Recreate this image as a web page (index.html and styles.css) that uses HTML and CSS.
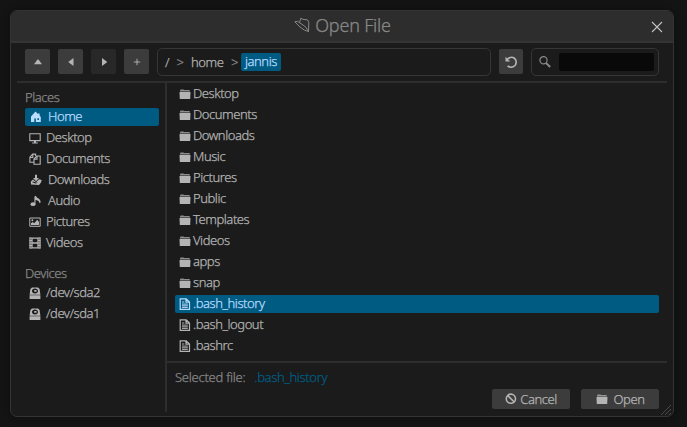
FILE: index.html
```html
<!DOCTYPE html>
<html lang="en">
<head>
<meta charset="utf-8">
<title>Open File</title>
<link rel="stylesheet" href="styles.css">
</head>
<body>
<svg class="defs" width="0" height="0">
  <symbol id="folder" viewBox="0 0 12 10"><path fill="currentColor" d="M.5 3H11.5L11.2 10H.8z"/><path fill="currentColor" opacity=".75" d="M1 2.6V1.2L1.8.5H4.5L5 1H10.2L11 1.8V2.6z"/></symbol>
  <symbol id="file" viewBox="0 0 12 12"><path fill="none" stroke="currentColor" stroke-width="1.2" d="M1.2.8H7.2L10.5 4V11.3H1.2zM7 .8V4.2H10.5"/><path stroke="currentColor" stroke-width="1" d="M3 4H5.3M3 6.1H8.8M3 7.8H8.8M3 9.4H8.8"/></symbol>
  <symbol id="drive" viewBox="0 0 12 12"><path fill="currentColor" fill-rule="evenodd" d="M3 .4H9L10.6 2 11.4 7.8H.6L1.4 2zM6 1.6C4.2 1.6 3 2.7 3 4S4.2 6.4 6 6.4 9 5.3 9 4 7.8 1.6 6 1.6z"/><path fill="currentColor" d="M5.2 2.9H7.6V4.8H5.2zM.6 8.3H11.4V11.9H.6z"/></symbol>
</svg>
<main class="window">
  <header class="titlebar">
    <svg class="title-icon" viewBox="0 0 16 16"><path d="M.8 4.8L3.5 4.3 11.5 9.8 14.5 14.5 10.5 13.2 6 10zM5.5 5.6L6.8 1.2 9 2.4 13.4 2.8 14.8 5.2 14.5 14.5"/></svg>
    <h1>Open File</h1>
    <svg class="close" viewBox="0 0 12 12"><path d="M1 1L11 11M11 1L1 11"/></svg>
  </header>
  <div class="toolbar">
    <div class="nav">
      <button><svg viewBox="0 0 12 12"><path fill="currentColor" d="M2 8.2L5.5 3.5H6.5L10 8.2z"/></svg></button>
      <button><svg viewBox="0 0 12 12"><path fill="currentColor" d="M8.5 2L3.5 5.7V6.3L8.5 10z"/></svg></button>
      <button class="dim"><svg viewBox="0 0 12 12"><path fill="currentColor" d="M4 2L9 5.7V6.3L4 10z"/></svg></button>
      <button><svg viewBox="0 0 12 12"><path stroke="currentColor" stroke-width=".9" d="M2.8 6H9.2M6 2.8V9.2"/></svg></button>
    </div>
    <div class="path"><span class="root">/</span><i>&gt;</i><span>home</span><i class="second">&gt;</i><b>jannis</b></div>
    <button class="reload"><svg viewBox="0 0 12 12"><path fill="none" stroke="currentColor" stroke-width="1.6" d="M2 3.4L4 2C8 -.2 11.3 2.8 11.2 6.2C11 10.6 6.2 12.6 2.6 10"/><path fill="currentColor" d="M.5 .8V5.6H5.2z"/></svg></button>
    <div class="search"><svg viewBox="0 0 12 12"><circle cx="4.5" cy="4.3" r="3.6"/><path d="M7 7L11.2 11" stroke-width="2"/></svg><div class="query"></div></div>
  </div>
  <div class="content">
    <nav class="sidebar">
      <h2>Places</h2>
      <ul>
        <li class="selected inset"><svg viewBox="0 0 12 12"><path fill="currentColor" fill-rule="evenodd" d="M5.5 .5L8 3V2.4H9.6V4.6L10.8 6V11H1V5.6zM4.3 7.5V11H5.9V7.5zM7.4 7.3V9H9V7.3z"/></svg><span>Home</span></li>
        <li><svg viewBox="0 0 12 12"><path fill="none" stroke="currentColor" stroke-width="1.1" d="M.8 1.8H11.2V8.6H.8z"/><path fill="currentColor" d="M5 9H7V10.4H8.8V11.6H3.2V10.4H5z"/></svg><span>Desktop</span></li>
        <li><svg viewBox="0 0 12 12"><path fill="none" stroke="currentColor" stroke-width="1.1" d="M4.6 9.2H.9V4.2L3.6 1.1H6.6V3M.9 4.5H3.8V1.2M5 6L7.8 3H11.2V11.3H5zM5 6.3H8V3"/></svg><span>Documents</span></li>
        <li class="inset"><svg viewBox="0 0 12 12"><path fill="currentColor" fill-rule="evenodd" d="M5 .8H7V4H9L6 7.2 3 4H5zM.8 7.4L3 5.5 6 8.3 9 5.2 11.7 6 11 8.5 9 11 1 10.5zM2.2 8.3L5.5 9.5 8 8.8 6 8.6 3 7.6z"/></svg><span>Downloads</span></li>
        <li class="inset"><svg viewBox="0 0 12 12"><ellipse cx="3" cy="9.2" rx="2.5" ry="1.9" fill="currentColor"/><path fill="currentColor" d="M4.4 9V1.5L6 .8C6.5 3.5 11 3.5 10.6 7.5L9.5 8.3C9.5 6 7 5 5.5 5V9z"/></svg><span>Audio</span></li>
        <li><svg viewBox="0 0 12 12"><path fill="none" stroke="currentColor" d="M.8 2H11.2V10.3H.8z"/><circle cx="3.4" cy="4.3" r="1" fill="currentColor"/><path fill="currentColor" d="M2 9V7.2L3.7 6 5.2 7.2 8.2 3.8 10 6V9z"/></svg><span>Pictures</span></li>
        <li><svg viewBox="0 0 12 12"><path fill="none" stroke="currentColor" stroke-width="1.3" d="M1 .5V11.6M11 .5V11.6M3 .8V11.4M9 .8V11.4M3 1.2H9M3 6H9M3 10.8H9"/><path stroke="currentColor" d="M.5 1H3M.5 3.5H3M.5 6H3M.5 8.5H3M.5 11H3M9 1H11.5M9 3.5H11.5M9 6H11.5M9 8.5H11.5M9 11H11.5"/></svg><span>Videos</span></li>
      </ul>
      <h2 class="devices">Devices</h2>
      <ul>
        <li><svg><use href="#drive"/></svg><span>/dev/sda2</span></li>
        <li><svg><use href="#drive"/></svg><span>/dev/sda1</span></li>
      </ul>
    </nav>
    <section class="main">
      <ul class="files">
        <li><svg class="folder"><use href="#folder"/></svg><span>Desktop</span></li>
        <li><svg class="folder"><use href="#folder"/></svg><span>Documents</span></li>
        <li><svg class="folder"><use href="#folder"/></svg><span>Downloads</span></li>
        <li><svg class="folder"><use href="#folder"/></svg><span>Music</span></li>
        <li><svg class="folder"><use href="#folder"/></svg><span>Pictures</span></li>
        <li><svg class="folder"><use href="#folder"/></svg><span>Public</span></li>
        <li><svg class="folder"><use href="#folder"/></svg><span>Templates</span></li>
        <li><svg class="folder"><use href="#folder"/></svg><span>Videos</span></li>
        <li><svg class="folder"><use href="#folder"/></svg><span>apps</span></li>
        <li><svg class="folder"><use href="#folder"/></svg><span>snap</span></li>
        <li class="selected"><svg><use href="#file"/></svg><span>.bash_history</span></li>
        <li><svg><use href="#file"/></svg><span>.bash_logout</span></li>
        <li><svg><use href="#file"/></svg><span>.bashrc</span></li>
      </ul>
      <footer>
        <p>Selected file:<span>.bash_history</span></p>
        <div class="actions">
          <button><svg viewBox="0 0 12 12"><path fill="none" stroke="currentColor" stroke-width="1.6" d="M2.6 2.4L9.2 9M10.5 5.7A4.6 4.6 0 1 1 1.3 5.7A4.6 4.6 0 1 1 10.5 5.7"/></svg><span>Cancel</span></button>
          <button class="open"><svg class="folder"><use href="#folder"/></svg><span>Open</span></button>
        </div>
      </footer>
    </section>
  </div>
  <svg class="grip" viewBox="0 0 12 12"><path d="M1 11L11 1M5 11L11 5M9 11L11 9"/></svg>
</main>
</body>
</html>
```
FILE: styles.css
```css
* { box-sizing: border-box; margin: 0; padding: 0; }
body {
  width: 687px; height: 427px; overflow: hidden;
  padding: 10px 13px 10px 10px;
  background: #151515; color: #b4b4b4;
  font: 300 13px/18px "Noto Sans", "Open Sans", sans-serif;
  letter-spacing: -0.45px;
  -webkit-text-stroke: 0.25px currentColor;
}
.defs { position: absolute; }
ul { list-style: none; }
button {
  border: 0; border-radius: 2px; background: #3c3c3c; color: inherit;
  font: inherit; letter-spacing: inherit;
  display: flex; align-items: center; justify-content: center;
}
svg { width: 12px; height: 12px; flex: none; }
.window {
  position: relative; height: 407px; width: 664px;
  display: flex; flex-direction: column;
  border: 1.5px solid #343434; border-radius: 7px;
  background: #1b1b1b; box-shadow: 0 0 12px #0d0d0d; overflow: hidden;
}
.titlebar {
  height: 32px; flex: none; display: flex; align-items: center; justify-content: center;
  background: #2d2d2d; border-bottom: 2px solid #343434;
  color: #888; position: relative;
}
h1 { font-size: 18px; font-weight: 300; line-height: 24px; letter-spacing: -0.2px; margin-top: -3px; }
.title-icon { width: 16px; height: 16px; margin: -2px 5px 0 1px; }
.title-icon path { fill: none; stroke: currentColor; stroke-width: 1; }
.close { position: absolute; right: 10px; top: 10px; color: #c0c0c0; }
.close path { stroke: currentColor; stroke-width: 1.1; }
.toolbar {
  height: 40px; flex: none; margin: 0 6px; padding: 5px 8px 6px;
  display: flex; align-items: center; border-bottom: 2px solid #2d2d2d;
}
.nav { display: flex; gap: 8px; }
.nav button, .reload { width: 25px; height: 25px; }
.nav .dim { background: #282828; }
.path {
  width: 335px; height: 28px; margin: 0 8px 0 8px; padding-left: 7px;
  display: flex; align-items: center; border: 1px solid #363636; border-radius: 5px;
}
.path i { font-style: normal; color: #888; margin: 0 7.5px 0 7.5px; }
.path .second { margin-right: 3px; }
.path b { font-weight: 300; background: #005b82; color: #b8dcff; border-radius: 2px; height: 18px; line-height: 17px; padding: 0 4px; }
.search {
  width: 128px; height: 28px; margin-left: 8px; padding: 0 4px 0 7px;
  display: flex; align-items: center; justify-content: space-between;
  border: 1px solid #363636; border-radius: 5px;
}
.search svg { fill: none; stroke: #888; stroke-width: 1.2; }
.query { width: 95px; height: 18px; background: #090909; border-radius: 2px; }
.content { flex: 1; min-height: 0; display: flex; margin: 0 6px 4px; }
.sidebar { width: 150px; flex: none; border-right: 2px solid #2d2d2d; padding: 5px 6px 0 8px; }
h2 { font-size: 13px; line-height: 18px; font-weight: 300; color: #888; margin-bottom: 2px; }
.devices { margin-top: 12px; }
li { height: 18px; margin-bottom: 3px; padding-left: 4px; border-radius: 2px; display: flex; align-items: center; gap: 5px; white-space: nowrap; }
li span { margin-top: -2px; }
.inset svg { margin-left: 1px; margin-right: 1px; }
.selected { background: #005b82; color: #b8dcff; }
.main { flex: 1; display: flex; flex-direction: column; }
.files { height: 278px; padding: 2px 8px 0; }
.files li { gap: 2px; }
.folder { height: 10px; margin-top: 0; }
footer { flex: 1; border-top: 2px solid #2d2d2d; padding: 5px 8px 0; color: #888; }
footer p { letter-spacing: -0.25px; }
footer p span { color: #005b82; margin-left: 9px; letter-spacing: -0.35px; }
.actions { display: flex; justify-content: flex-end; gap: 11px; margin-top: 3px; }
.actions button { width: 78px; height: 20px; gap: 3px; color: #b4b4b4; }
.actions button span { margin-top: -1px; }
.actions .open { gap: 6px; }
.grip { position: absolute; right: 1px; bottom: 0; }
.grip path { stroke: #555; stroke-width: .8; }
```
